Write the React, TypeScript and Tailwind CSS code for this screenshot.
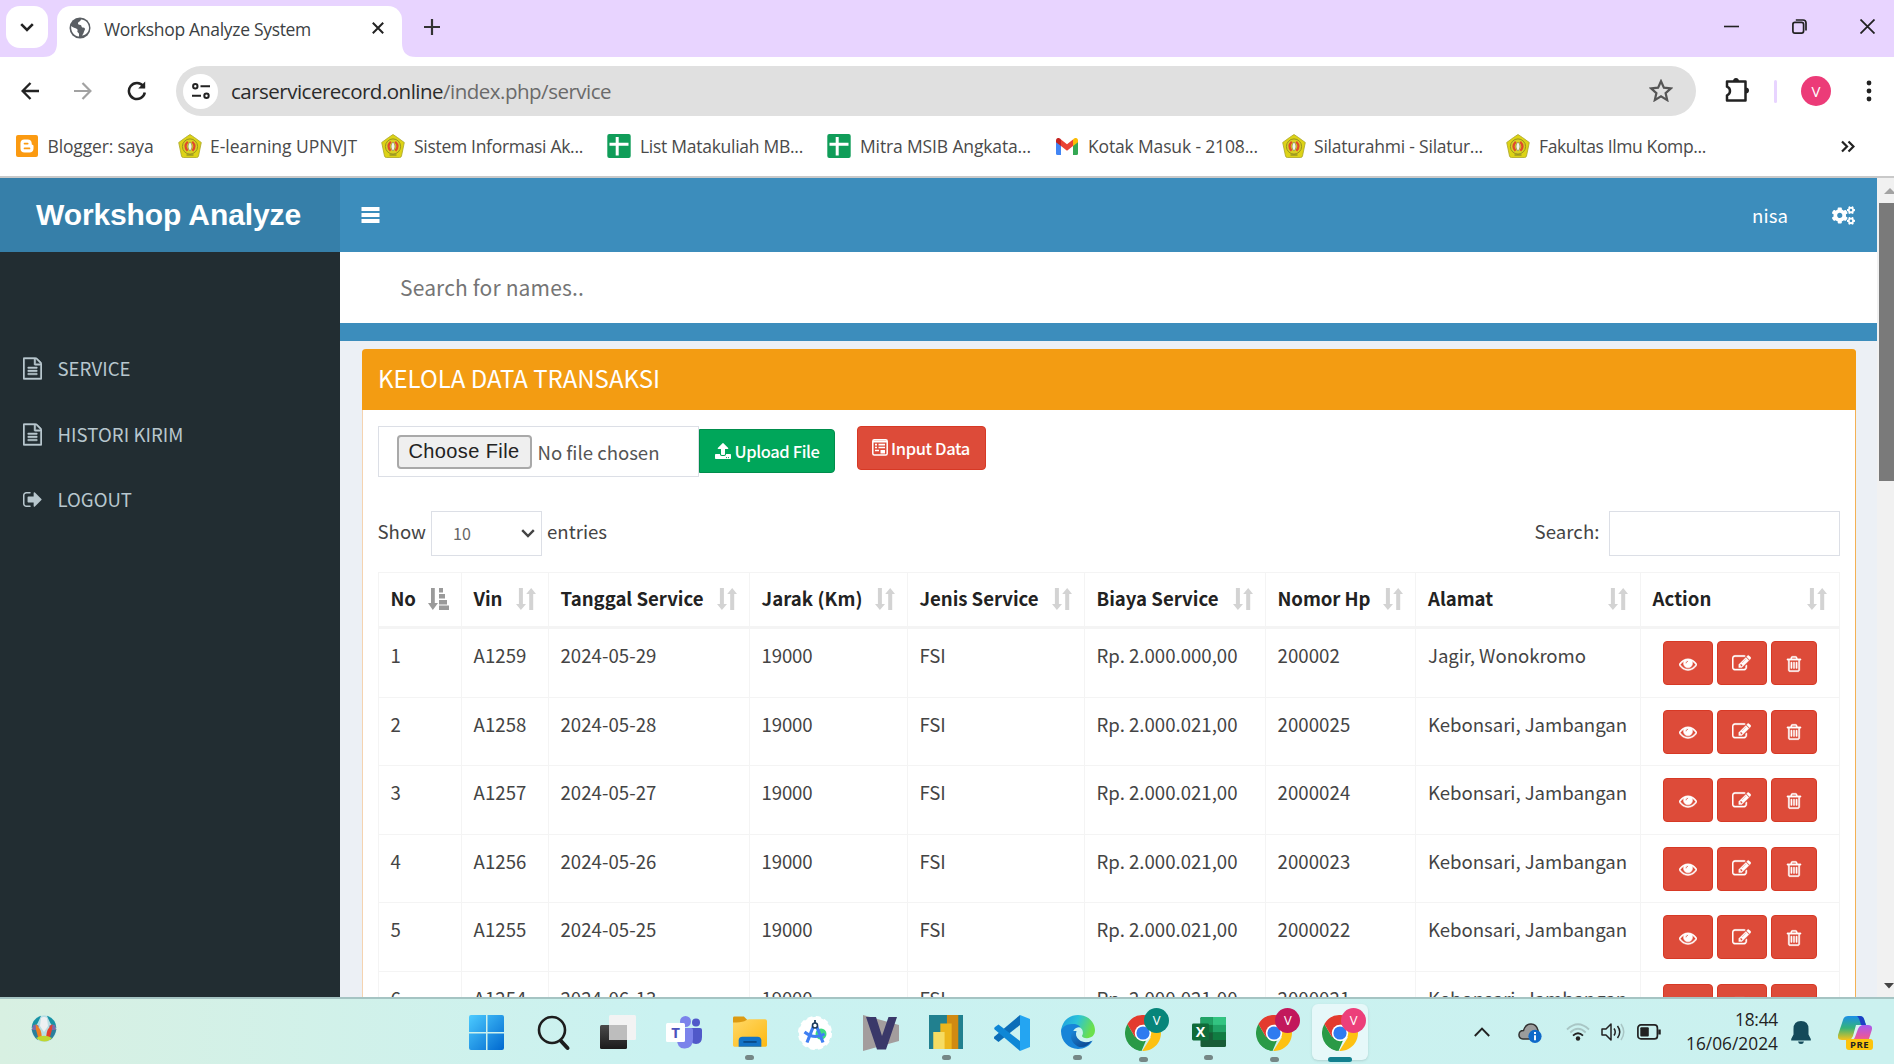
import { useLayoutEffect, useRef, useState, type ReactNode } from "react";
import { FaCogs, FaUpload } from "react-icons/fa";

const SEGOE = "font-['Open_Sans','Noto_Sans',sans-serif]";
const SOURCE = "font-['Noto_Sans_CJK_SC','Noto_Sans',sans-serif]";

/** Single line of text whose tracking is adjusted so that it spans `w` pixels. */
function Fit({ w, className = "", children }: { w: number; className?: string; children: ReactNode }) {
  const ref = useRef<HTMLSpanElement>(null);
  const [spacing, setSpacing] = useState(0);
  useLayoutEffect(() => {
    const el = ref.current;
    if (!el) return;
    const n = (el.textContent ?? "").length;
    if (n > 0) setSpacing((w - el.getBoundingClientRect().width) / n);
  }, [w]);
  return (
    <span ref={ref} className={`inline-block shrink-0 whitespace-pre ${className}`} style={{ letterSpacing: spacing }}>
      {children}
    </span>
  );
}

/* ---------- icons ---------- */

function FileTextIcon() {
  return (
    <svg viewBox="0 0 1536 1792" className="h-[23px] w-[19px]" fill="currentColor" stroke="currentColor" strokeWidth="35">
      <path d="M1468 380q28 28 48 76t20 88v1152q0 40-28 68t-68 28h-1344q-40 0-68-28t-28-68v-1600q0-40 28-68t68-28h896q40 0 88 20t76 48zm-444-244v376h376q-10-29-22-41l-313-313q-12-12-41-22zm384 1528v-1024h-416q-40 0-68-28t-28-68v-416h-768v1536h1280zm-1024-864q0-14 9-23t23-9h704q14 0 23 9t9 23v64q0 14-9 23t-23 9h-704q-14 0-23-9t-9-23v-64zm736 224q14 0 23 9t9 23v64q0 14-9 23t-23 9h-704q-14 0-23-9t-9-23v-64q0-14 9-23t23-9h704zm0 256q14 0 23 9t9 23v64q0 14-9 23t-23 9h-704q-14 0-23-9t-9-23v-64q0-14 9-23t23-9h704z" />
    </svg>
  );
}

function SignOutIcon() {
  return (
    <svg viewBox="64 256 1600 1280" className="h-[17px] w-[19px]" fill="currentColor">
      <path d="M704 1440q0 4 1 20t.5 26.5-3 23.5-10 19.5-20.5 6.5h-320q-119 0-203.5-84.5t-84.5-203.5v-704q0-119 84.5-203.5t203.5-84.5h320q13 0 22.5 9.5t9.5 22.5q0 4 1 20t.5 26.5-3 23.5-10 19.5-20.5 6.5h-320q-66 0-113 47t-47 113v704q0 66 47 113t113 47h312l11.5 1 11.5 3 8 5.5 7 9 2 13.5zm928-544q0 26-19 45l-544 544q-19 19-45 19t-45-19-19-45v-288h-448q-26 0-45-19t-19-45v-384q0-26 19-45t45-19h448v-288q0-26 19-45t45-19 45 19l544 544q19 19 19 45z" />
    </svg>
  );
}

function EyeIcon() {
  return (
    <svg viewBox="0 0 1792 1792" className="h-[18px] w-[18px]" fill="currentColor" stroke="currentColor" strokeWidth="50">
      <path d="M1664 960q-152-236-381-353 61 104 61 225 0 185-131.5 316.5t-316.5 131.5-316.5-131.5-131.5-316.5q0-121 61-225-229 117-381 353 133 205 333.5 326.5t434.5 121.5 434.5-121.5 333.5-326.5zm-720-384q0-20-14-34t-34-14q-125 0-214.5 89.5t-89.5 214.5q0 20 14 34t34 14 34-14 14-34q0-86 61-147t147-61q20 0 34-14t14-34zm848 384q0 34-20 69-140 230-376.5 368.5t-499.5 138.5-499.5-139-376.5-368q-20-35-20-69t20-69q140-229 376.5-368t499.5-139 499.5 139 376.5 368q20 35 20 69z" />
      <circle cx="896" cy="832" r="300" />
      <path d="M700 830q0-190 196-200" fill="none" stroke="#dd4b39" strokeWidth="70" />
    </svg>
  );
}

function EditIcon() {
  return (
    <svg viewBox="0 0 1792 1792" className="h-[19px] w-[19px]" fill="currentColor" stroke="currentColor" strokeWidth="35">
      <path d="M888 1184l116-116-152-152-116 116v56h96v96h56zm440-720q-16-16-33 1l-350 350q-17 17-1 33t33-1l350-350q17-17 1-33zm80 594v190q0 119-84.5 203.5t-203.5 84.5h-832q-119 0-203.5-84.5t-84.5-203.5v-832q0-119 84.5-203.5t203.5-84.5h832q63 0 117 25 15 7 18 23 3 17-9 29l-49 49q-14 14-32 8-23-6-45-6h-832q-66 0-113 47t-47 113v832q0 66 47 113t113 47h832q66 0 113-47t47-113v-126q0-13 9-22l64-64q15-15 35-7t20 29zm-96-738l288 288-672 672h-288v-288zm444 132l-92 92-288-288 92-92q28-28 68-28t68 28l152 152q28 28 28 68t-28 68z" />
    </svg>
  );
}

function TrashIcon() {
  return (
    <svg viewBox="0 0 1792 1792" className="h-[18px] w-[18px]" fill="currentColor" stroke="currentColor" strokeWidth="40">
      <path d="M704 736v576q0 14-9 23t-23 9h-64q-14 0-23-9t-9-23v-576q0-14 9-23t23-9h64q14 0 23 9t9 23zm256 0v576q0 14-9 23t-23 9h-64q-14 0-23-9t-9-23v-576q0-14 9-23t23-9h64q14 0 23 9t9 23zm256 0v576q0 14-9 23t-23 9h-64q-14 0-23-9t-9-23v-576q0-14 9-23t23-9h64q14 0 23 9t9 23zm128 724v-948h-896v948q0 22 7 40.500t14.500 27 10.500 8.500h832q3 0 10.500-8.500t14.500-27 7-40.500zm-672-1076h448l-48-117q-7-9-17-11h-317q-10 2-17 11zm928 32v64q0 14-9 23t-23 9h-96v948q0 83-47 143.500t-113 60.500h-832q-66 0-113-58.500t-47-141.500v-952h-96q-14 0-23-9t-9-23v-64q0-14 9-23t23-9h309l70-167q15-37 54-63t79-26h320q40 0 79 26t54 63l70 167h309q14 0 23 9t9 23z" />
    </svg>
  );
}

function SortIcon({ active = false }: { active?: boolean }) {
  return active ? (
    <svg viewBox="0 0 21 22" className="h-[22px] w-[21px] shrink-0 text-[#9a9a9a]" fill="currentColor">
      <path d="M3 0h3.800v15H10l-5.200 7L0 15h3zM11 0h4v4.400h-4zM11 6h6v4.400h-6zM11 12h8v4.400h-8zM11 17.600h10V22H11z" />
    </svg>
  ) : (
    <svg viewBox="0 0 20 22" className="h-[22px] w-[20px] shrink-0 text-[#d3d3d3]" fill="currentColor">
      <path d="M2.900 0h4v16H10L4.900 22 0 16h2.900zM13.200 22h4V6H20L15.200 0 10.200 6h3z" />
    </svg>
  );
}

function FormIcon() {
  return (
    <svg viewBox="0 0 16 17" className="h-[17px] w-[16px]" fill="none" stroke="currentColor" strokeWidth="1.500">
      <rect x=".8" y=".8" width="14.400" height="15.200" rx="1.500" />
      <path d="M1 2.500h14" strokeWidth="2" />
      <path d="M3 5.600h2M6.500 5.600h6.500M3 8.500h2M6.500 8.500h6.500M3 11.500h4" strokeWidth="1.700" />
      <path d="M8.500 11h4.500v3.500H8.500z" fill="currentColor" stroke="none" />
    </svg>
  );
}

function GlobeIcon() {
  return (
    <svg viewBox="0 0 22 22" className="h-[22px] w-[22px]">
      <circle cx="11" cy="11" r="10.500" fill="#5a5e63" />
      <path d="M12 2.500c-.5 2-2.500 2-3 3.500-.3 1.500 1 1.500 2.500 2s.5 2.500 2.500 2.500 2.500 1.500 1.500 3-.5 3-2.500 5c4-.6 7-3.500 7-7.800 0-4.200-3.500-8.200-8-8.200zM2.200 9c1.500 2 4.300 1.500 5.800 3s-.5 2.500 1 3.500 1 2.500 1 4C5 19 1.700 15 2.200 9z" fill="#fff" />
    </svg>
  );
}

function UniversityIcon() {
  return (
    <svg viewBox="0 0 24 24" className="h-[24px] w-[24px] shrink-0">
      <path d="M12 .5l4.500 3L23.300 8.500 20.500 22q-.3 1.500-2 1.500h-13q-1.700 0-2-1.500L.7 8.500 7.500 3.500z" fill="#ddd316" stroke="#a9a428" strokeWidth=".8" />
      <circle cx="12" cy="12.500" r="7.600" fill="#d9cf22" stroke="#8f8b23" strokeWidth=".9" />
      <path d="M9.800 7.800q-4.500 4.500-.2 9M14.200 7.800q4.500 4.500.2 9" fill="none" stroke="#e0492c" strokeWidth="2.200" />
      <path d="M12 8c1.300 1.400 1.900 2.600 1.900 4.400S13.200 15.800 12 17c-1.200-1.200-1.900-2.700-1.900-4.600S10.700 9.400 12 8z" fill="#f3f3ea" stroke="#7c7a3c" strokeWidth=".6" />
      <path d="M8.500 21h7" stroke="#7c7a2b" strokeWidth="1" />
    </svg>
  );
}

function SheetIcon() {
  return (
    <svg viewBox="0 0 24 24" className="h-[24px] w-[24px] shrink-0">
      <rect x=".3" width="23.400" height="24" rx="2" fill="#109d59" />
      <path d="M10.200 3v18.500M2.500 10.300h19" stroke="#fff" strokeWidth="3" />
    </svg>
  );
}

function BloggerIcon() {
  return (
    <svg viewBox="0 0 22 22" className="h-[22px] w-[22px] shrink-0">
      <rect width="22" height="22" rx="2" fill="#fb9a11" />
      <path d="M8.200 4.500h3.500c2.500 0 4 1.500 4 3.800 0 1.600.5 1.500 1.300 1.700.4.200.5.500.5 1v2.500c0 2.500-1.600 4-4 4H8.500c-2.500 0-4-1.500-4-4V8.300c0-2.300 1.300-3.800 3.700-3.800z" fill="#fff" />
      <path d="M8.500 8.600h3.200M8.500 13.400h5" stroke="#fb9a11" strokeWidth="1.700" strokeLinecap="round" />
    </svg>
  );
}

function GmailIcon() {
  return (
    <svg viewBox="0 0 22 17" className="h-[17px] w-[22px] shrink-0">
      <path d="M0 3v12.500Q0 17 1.500 17H5V7z" fill="#4285f4" />
      <path d="M22 3v12.500q0 1.500-1.500 1.500H17V7z" fill="#34a853" />
      <path d="M5 1.500l6 4.700 6-4.700V8l-6 4.700L5 8z" fill="#ea4335" />
      <path d="M0 2.500C0 .3 2.300-.8 4 .6l1 .9V8L0 4.200z" fill="#c5221f" />
      <path d="M22 2.500C22 .3 19.700-.8 18 .6l-1 .9V8l5-3.800z" fill="#fbbc04" />
    </svg>
  );
}

function BookmarkIcon({ kind }: { kind: string }) {
  if (kind === "blogger") return <BloggerIcon />;
  if (kind === "sheet") return <SheetIcon />;
  if (kind === "gmail") return <GmailIcon />;
  return <UniversityIcon />;
}

/* ---------- browser chrome ---------- */

function TabStrip() {
  return (
    <div className="flex h-[57px] shrink-0 bg-[#e8d4ff] pl-[6px]">
      <button className="mt-[6px] flex h-[42px] w-[42px] items-center justify-center rounded-[14px] bg-white">
        <svg viewBox="0 0 14 9" className="h-[9px] w-[14px]" fill="none" stroke="#222" strokeWidth="2.600">
          <path d="M1.200 1.200L7 7l5.800-5.800" />
        </svg>
      </button>
      <svg viewBox="0 0 14 14" className="-ml-[5px] h-[14px] w-[14px] self-end" fill="#fff">
        <path d="M14 0v14H0Q14 14 14 0z" />
      </svg>
      <div className="mt-[6px] flex h-[51px] w-[345px] items-center rounded-t-[14px] bg-white pb-[8px] pl-[12px]">
        <GlobeIcon />
        <Fit w={207} className="ml-[13px] mt-[2px] text-[17.500px] leading-6 text-[#3c3f43]">
          Workshop Analyze System
        </Fit>
        <svg viewBox="0 0 12 12" className="ml-[61px] h-[12px] w-[12px]" stroke="#222" strokeWidth="2">
          <path d="M.8.8l10.400 10.400M11.200.8L.8 11.200" />
        </svg>
      </div>
      <svg viewBox="0 0 14 14" className="h-[14px] w-[14px] self-end" fill="#fff">
        <path d="M0 0v14h14Q0 14 0 0z" />
      </svg>
      <svg viewBox="0 0 16 16" className="ml-[8px] mt-[19px] h-[16px] w-[16px]" stroke="#333" strokeWidth="2.200">
        <path d="M8 0v16M0 8h16" />
      </svg>
      <div className="ml-auto flex h-[53px] items-center gap-[53px] pr-[19px]">
        <svg viewBox="0 0 15 15" className="h-[15px] w-[15px]" stroke="#222" strokeWidth="1.600">
          <path d="M0 7.500h15" />
        </svg>
        <svg viewBox="0 0 15 15" className="h-[15px] w-[15px]" fill="none" stroke="#222" strokeWidth="1.700">
          <rect x=".9" y="3.400" width="10.700" height="10.700" rx="2" />
          <path d="M3.800 1h7.200q3 0 3 3v7.400" />
        </svg>
        <svg viewBox="0 0 15 15" className="h-[15px] w-[15px]" stroke="#222" strokeWidth="1.800">
          <path d="M.5.5l14 14M14.500.5l-14 14" />
        </svg>
      </div>
    </div>
  );
}

function Toolbar() {
  return (
    <div className="flex h-[68px] shrink-0 items-center bg-white pl-[21px]">
      <svg viewBox="0 0 18 18" className="h-[18px] w-[18px]" fill="none" stroke="#222" strokeWidth="2.400">
        <path d="M18 9H2M9.500 1L1.600 9l7.900 8" />
      </svg>
      <svg viewBox="0 0 18 18" className="ml-[35px] h-[18px] w-[18px]" fill="none" stroke="#a2a2a2" strokeWidth="2.200">
        <path d="M0 9h16M8.500 1l7.900 8-7.900 8" />
      </svg>
      <svg viewBox="0 0 20 20" className="ml-[35px] h-[20px] w-[20px]" fill="none" stroke="#222" strokeWidth="2.500">
        <path d="M17.800 11.500a8 8 0 1 1-1.500-6.300l1 1.300" />
        <path d="M18.200.5v7h-7z" fill="#222" stroke="none" />
      </svg>
      <div className="ml-[29px] flex h-[50px] w-[1520px] items-center rounded-full bg-[#e0e0e0] pl-[7px] pr-[23px]">
        <div className="flex h-[35px] w-[35px] items-center justify-center rounded-full bg-white">
          <svg viewBox="0 0 18 16" className="h-[16px] w-[18px]" fill="none" stroke="#222" strokeWidth="2">
            <circle cx="3.300" cy="3.200" r="2.200" />
            <path d="M8.500 3.200H18M0 12.800h9" />
            <circle cx="14.500" cy="12.800" r="2.200" />
          </svg>
        </div>
        <Fit w={380} className="ml-[13px] text-[20.500px] leading-7 text-[#6a6a6a]">
          <span className="text-[#2b2b2b]">carservicerecord.online</span>/index.php/service
        </Fit>
        <svg viewBox="0 0 24 23" className="mb-px ml-auto h-[23px] w-[24px]" fill="none" stroke="#555" strokeWidth="2.200">
          <path d="M12 2.200l2.900 6.500 7 .7-5.300 4.700 1.600 7L12 17.400 5.800 21.100l1.600-7L2.100 9.400l7-.7z" />
        </svg>
      </div>
      <svg viewBox="0 0 26 25" className="mb-[2px] ml-[28px] h-[25px] w-[26px]" fill="none" stroke="#222" strokeWidth="2.500">
        <path d="M3 3.500h18.500v19H3v-5.200q3-1.200 3-4.300T3 8.700z" strokeLinejoin="round" />
        <path d="M9 3.500a3 3.500 0 0 1 6 0zM21.500 9.500a3.500 3 0 0 1 0 6z" fill="#222" stroke="none" />
      </svg>
      <div className="ml-[24px] h-[23px] w-[3px] rounded bg-[#e8d4ff]" />
      <div className="ml-[24px] flex h-[30px] w-[30px] items-center justify-center rounded-full bg-[#ec3b78] text-[15px] leading-none text-white">
        V
      </div>
      <svg viewBox="0 0 6 22" className="ml-[35px] h-[22px] w-[6px]" fill="#222">
        <circle cx="3" cy="3" r="2.400" />
        <circle cx="3" cy="11" r="2.400" />
        <circle cx="3" cy="19" r="2.400" />
      </svg>
    </div>
  );
}

const bookmarks = [
  { kind: "blogger", label: "Blogger: saya", w: 106, gap: "gap-[9.500px]", item: "w-[162px]" },
  { kind: "uni", label: "E-learning UPNVJT", w: 147, gap: "gap-[8px]", item: "w-[203px]" },
  { kind: "uni", label: "Sistem Informasi Ak...", w: 169, gap: "gap-[9px]", item: "w-[226px]" },
  { kind: "sheet", label: "List Matakuliah MB...", w: 163, gap: "gap-[9px]", item: "w-[220px]" },
  { kind: "sheet", label: "Mitra MSIB Angkata...", w: 171, gap: "gap-[9px]", item: "w-[229px]" },
  { kind: "gmail", label: "Kotak Masuk - 2108...", w: 170, gap: "gap-[10px]", item: "w-[226px]" },
  { kind: "uni", label: "Silaturahmi - Silatur...", w: 169, gap: "gap-[8px]", item: "w-[224px]" },
  { kind: "uni", label: "Fakultas Ilmu Komp...", w: 167, gap: "gap-[9px]", item: "w-[226px]" },
];

function BookmarksBar() {
  return (
    <div className="flex h-[53px] shrink-0 items-center border-b-2 border-[#c9c9c9] bg-white pb-[9px] pl-[16px]">
      {bookmarks.map((b) => (
        <div key={b.label} className={`flex shrink-0 items-center ${b.item} ${b.gap}`}>
          <BookmarkIcon kind={b.kind} />
          <Fit w={b.w} className="-mt-px text-[17.500px] leading-6 text-[#4a4a4a]">
            {b.label}
          </Fit>
        </div>
      ))}
      <svg viewBox="0 0 14 12" className="ml-auto mr-[39px] h-[13px] w-[14px]" fill="none" stroke="#222" strokeWidth="2.200">
        <path d="M1 1l5 5-5 5M7.500 1l5 5-5 5" />
      </svg>
    </div>
  );
}

/* ---------- web page ---------- */

function Sidebar() {
  const items = [
    { label: "SERVICE", w: 73, icon: <FileTextIcon /> },
    { label: "HISTORI KIRIM", w: 126, icon: <FileTextIcon /> },
    { label: "LOGOUT", w: 74.5, icon: <SignOutIcon /> },
  ];
  return (
    <aside className="w-[339.500px] shrink-0 bg-[#222d32]">
      <div className="flex h-[74px] items-center bg-[#367fa9] pl-[36px]">
        <Fit w={265} className="font-['Liberation_Sans',Arial,sans-serif] text-[30px] font-bold leading-9 text-white">
          Workshop Analyze
        </Fit>
      </div>
      <nav className="mt-[84px] text-[#b8c7ce]">
        {items.map((it) => (
          <div key={it.label} className="flex h-[65.500px] items-center pl-[23px]">
            {it.icon}
            <Fit w={it.w} className="-mt-px ml-[15.500px] text-[18.600px] leading-7">
              {it.label}
            </Fit>
          </div>
        ))}
      </nav>
    </aside>
  );
}

const columns = [
  { label: "No", w: 25, width: "w-[83px]", active: true },
  { label: "Vin", w: 29, width: "w-[87px]" },
  { label: "Tanggal Service", w: 143, width: "w-[201px]" },
  { label: "Jarak (Km)", w: 101, width: "w-[158px]" },
  { label: "Jenis Service", w: 119, width: "w-[177px]" },
  { label: "Biaya Service", w: 122, width: "w-[181px]" },
  { label: "Nomor Hp", w: 93, width: "w-[150.500px]" },
  { label: "Alamat", w: 65, width: "w-[224.500px]" },
  { label: "Action", w: 59, width: "w-[199px]" },
];

const rows = [
  ["1", "A1259", "2024-05-29", "19000", "FSI", "Rp. 2.000.000,00", "200002", "Jagir, Wonokromo"],
  ["2", "A1258", "2024-05-28", "19000", "FSI", "Rp. 2.000.021,00", "2000025", "Kebonsari, Jambangan"],
  ["3", "A1257", "2024-05-27", "19000", "FSI", "Rp. 2.000.021,00", "2000024", "Kebonsari, Jambangan"],
  ["4", "A1256", "2024-05-26", "19000", "FSI", "Rp. 2.000.021,00", "2000023", "Kebonsari, Jambangan"],
  ["5", "A1255", "2024-05-25", "19000", "FSI", "Rp. 2.000.021,00", "2000022", "Kebonsari, Jambangan"],
  ["6", "A1254", "2024-06-13", "19000", "FSI", "Rp. 2.000.021,00", "2000021", "Kebonsari, Jambangan"],
];

function cellWidth(col: number, text: string) {
  if (col === 7) return text.startsWith("Jagir") ? 158 : 199;
  return [10, 53, 96, 51, 26, 141, text.length * 10.400][col];
}

function DataTable() {
  return (
    <div className="mt-[16px] w-[1462px] border-l border-t border-[#f4f4f4]">
      <div className="flex h-[56px] border-b-[3px] border-[#f4f4f4]">
        {columns.map((c) => (
          <div key={c.label} className={`flex shrink-0 items-center justify-between border-r border-[#f4f4f4] pb-[2px] pl-[12px] pr-[12px] ${c.width}`}>
            <Fit w={c.w} className="-mt-px text-[18.600px] font-bold leading-7 text-[#222]">
              {c.label}
            </Fit>
            <SortIcon active={c.active} />
          </div>
        ))}
      </div>
      {rows.map((r) => (
        <div key={r[0]} className="flex h-[68.500px] border-b border-[#f4f4f4]">
          {r.map((t, i) => (
            <div key={i} className={`shrink-0 border-r border-[#f4f4f4] pl-[12px] pt-[12px] ${columns[i].width}`}>
              <Fit w={cellWidth(i, t)} className="text-[18.600px] leading-7 text-[#444]">
                {t}
              </Fit>
            </div>
          ))}
          <div className="flex w-[199px] shrink-0 gap-[4px] border-r border-[#f4f4f4] pl-[22px] pt-[12px] text-white">
            <button className="flex h-[44px] w-[50px] items-center justify-center rounded-[4px] border border-[#d73925] bg-[#dd4b39] pt-px">
              <EyeIcon />
            </button>
            <button className="flex h-[44px] w-[50px] items-center justify-center rounded-[4px] border border-[#d73925] bg-[#dd4b39]">
              <EditIcon />
            </button>
            <button className="flex h-[44px] w-[46px] items-center justify-center rounded-[4px] border border-[#d73925] bg-[#dd4b39] pt-px">
              <TrashIcon />
            </button>
          </div>
        </div>
      ))}
    </div>
  );
}

function Panel() {
  return (
    <section className="ml-[22px] mt-[8px] h-[700px] w-[1494px] shrink-0 rounded-t-[4px] border-x border-l-[#f5d3b0] border-r-[#f3b155] bg-white">
      <div className="-mx-px flex h-[61px] items-center rounded-t-[4px] bg-[#f39c12] pl-[16.500px]">
        <Fit w={282} className="-mt-[3px] text-[24px] leading-9 text-white">
          KELOLA DATA TRANSAKSI
        </Fit>
      </div>
      <div className="pl-[15px]">
        <div className="mt-[16px] flex h-[51px] items-start">
          <div className="flex h-[51px] w-[321px] items-center border border-[#dcdfe6] pl-[18px]">
            <button className="flex h-[34px] w-[135px] items-center justify-center rounded-[4px] border-2 border-[#a9a9a9] bg-[#efefef] pb-px">
              <Fit w={111} className="font-['Liberation_Sans',Arial,sans-serif] text-[20px] leading-6 text-[#222]">
                Choose File
              </Fit>
            </button>
            <Fit w={122} className="ml-[6px] text-[18.600px] leading-7 text-[#555]">
              No file chosen
            </Fit>
          </div>
          <button className="mt-[3px] flex h-[44px] w-[136px] items-center justify-center gap-[3px] rounded-r-[4px] border border-[#008d4c] bg-[#00a65a] text-white">
            <FaUpload className="h-[16px] w-[18px]" />
            <Fit w={85} className="text-[16.500px] font-medium leading-6">
              Upload File
            </Fit>
          </button>
          <button className="ml-[22px] flex h-[44px] w-[129px] items-center justify-center gap-[3px] rounded-[4px] border border-[#d73925] bg-[#dd4b39] pb-px text-white">
            <FormIcon />
            <Fit w={79} className="text-[16.500px] font-medium leading-6">
              Input Data
            </Fit>
          </button>
        </div>
        <div className="mt-[34px] flex h-[45px] w-[1462px] items-center text-[18.600px] text-[#444]">
          <Fit w={48.5} className="mb-[5px] leading-7">Show</Fit>
          <div className="ml-[5px] flex h-[45px] w-[111px] items-center justify-between border border-[#dcdfe6] pl-[21px] pr-[6px] text-[#666]">
            <Fit w={18} className="-mt-[2px] text-[16px] leading-6">10</Fit>
            <svg viewBox="0 0 14 9" className="h-[9px] w-[14px]" fill="none" stroke="#444" strokeWidth="2.400">
              <path d="M1.200 1.200L7 7l5.800-5.800" />
            </svg>
          </div>
          <Fit w={60} className="mb-[5px] ml-[5px] leading-7">entries</Fit>
          <Fit w={65} className="mb-[5px] ml-auto leading-7">Search:</Fit>
          <div className="ml-[9px] h-[45px] w-[231px] border border-[#dcdfe6]" />
        </div>
        <DataTable />
      </div>
    </section>
  );
}

function PageScrollbar() {
  return (
    <div className="flex w-[17px] shrink-0 flex-col items-end bg-[#f1f1f1]">
      <svg viewBox="0 0 12 25" className="h-[25px] w-[12px]" fill="#a3a3a3">
        <path d="M2 16l6-6 6 6z" />
      </svg>
      <div className="h-[278px] w-[15px] bg-[#7a7a7a]" />
      <svg viewBox="0 0 12 24" className="mt-auto h-[24px] w-[12px]" fill="#444">
        <path d="M2 10l5 5.500 5-5.500z" />
      </svg>
    </div>
  );
}

function WebPage() {
  return (
    <div className={`flex h-[819px] shrink-0 overflow-hidden ${SOURCE}`}>
      <Sidebar />
      <main className="flex w-[1537.500px] shrink-0 flex-col overflow-hidden bg-[#ecf0f5]">
        <div className="flex h-[74px] shrink-0 items-center bg-[#3c8dbc] pl-[21.500px] pr-[22px] text-white">
          <svg viewBox="0 0 19 16" className="h-[16px] w-[19px]" fill="currentColor">
            <path d="M.5 0h18v4H.5zM.5 6h18v4H.5zM.5 12h18v4H.5z" />
          </svg>
          <Fit w={36} className="-mt-px ml-auto text-[18.600px] leading-7">nisa</Fit>
          <FaCogs className="ml-[44px] h-[23px] w-[23px]" />
        </div>
        <div className="flex h-[71px] shrink-0 items-center bg-white pl-[60.500px]">
          <Fit w={184} className="-mt-px text-[21px] leading-8 text-[#757575]">Search for names..</Fit>
        </div>
        <div className="h-[18px] shrink-0 bg-[#3c8dbc]" />
        <Panel />
      </main>
      <PageScrollbar />
    </div>
  );
}

/* ---------- taskbar ---------- */

function ChromeLogo() {
  return (
    <svg viewBox="0 0 48 48" className="h-[36px] w-[36px]">
      <path d="M3.200 12L13.600 30 24 35 20 47.700A24 24 0 0 1 3.200 12z" fill="#2a9a47" />
      <path d="M13 28l11 7 4-1-6 14A24 24 0 0 1 5 38z" fill="#2a9a47" />
      <path d="M24 13h21.300A24 24 0 0 1 23 48l11.400-18z" fill="#fdc113" />
      <path d="M24 13H45.300L44.800 12A24 24 0 0 0 3.200 12l10.400 18z" fill="#e33b2e" />
      <circle cx="24" cy="24" r="11" fill="#fff" />
      <circle cx="24" cy="24" r="8.800" fill="#2f7bf0" />
    </svg>
  );
}

function ChromeProfile({ badge }: { badge: string }) {
  return (
    <div className="relative">
      <ChromeLogo />
      <div className={`absolute -right-[8px] -top-[7px] flex h-[25px] w-[25px] items-center justify-center rounded-full text-[13px] font-medium leading-none text-white ${badge}`}>
        V
      </div>
    </div>
  );
}

const I = "h-[36px] w-[36px]";

function WindowsIcon() {
  return (
    <svg viewBox="0 0 36 36" className={I}>
      <defs>
        <linearGradient id="win" x1="0" y1="0" x2="1" y2="1">
          <stop offset="0" stopColor="#4ccbff" />
          <stop offset="1" stopColor="#0068cf" />
        </linearGradient>
      </defs>
      <path d="M2 0h15v17H0V2q0-2 2-2zM18.500 0H33q2 0 2 2v15H18.500zM0 18.500h17V35H2q-2 0-2-2zM18.500 18.500H35V33q0 2-2 2H18.500z" fill="url(#win)" />
    </svg>
  );
}

function SearchTaskIcon() {
  return (
    <svg viewBox="0 0 36 36" className={I} fill="none" stroke="#1d1d1d">
      <circle cx="17" cy="15" r="13" strokeWidth="2.600" />
      <path d="M26 26l6.500 7" strokeWidth="4" strokeLinecap="round" />
    </svg>
  );
}

function TaskViewIcon() {
  return (
    <svg viewBox="0 0 36 36" className={I}>
      <defs>
        <linearGradient id="tv" x1="0" y1="0" x2="0" y2="1">
          <stop offset="0" stopColor="#4a4a4a" />
          <stop offset="1" stopColor="#1b1b1b" />
        </linearGradient>
      </defs>
      <rect x="0" y="10" width="27" height="24" rx="1.500" fill="url(#tv)" />
      <rect x="9" y="0" width="27" height="25" rx="1.500" fill="#f3f3f3" />
      <rect x="9" y="10" width="18" height="15" fill="#bdbdbd" />
    </svg>
  );
}

function TeamsIcon() {
  return (
    <svg viewBox="0 0 36 36" className={I}>
      <circle cx="19.500" cy="6.500" r="5.500" fill="#7b83eb" />
      <circle cx="30" cy="7.500" r="4" fill="#5059c9" />
      <path d="M24 13h10q2 0 2 2v7q0 7-6 7t-6-7z" fill="#5059c9" />
      <path d="M11 13h14q2 0 2 2v9q0 9-8 9.500T11 24z" fill="#7b83eb" />
      <rect x="0" y="8" width="19" height="19" rx="1.500" fill="#fff" />
      <text x="9.500" y="23" fontSize="15" fontWeight="700" textAnchor="middle" fill="#4b53bc">T</text>
    </svg>
  );
}

function ExplorerIcon() {
  return (
    <svg viewBox="0 0 36 36" className={I}>
      <defs>
        <linearGradient id="fold" x1="0" y1="0" x2="1" y2="1">
          <stop offset="0" stopColor="#ffd867" />
          <stop offset="1" stopColor="#fdb913" />
        </linearGradient>
      </defs>
      <path d="M0 3q0-1.500 1.500-1.500h10L15 5v6H0z" fill="#dc9a12" />
      <path d="M0 8q8 0 12-1.500 3-2 5-2h17q2 0 2 2V32q0 1.500-1.500 1.500h-33Q0 33.500 0 32z" fill="url(#fold)" />
      <path d="M6 33.500V27q0-4 4-4h16q4 0 4 4v6.500z" fill="#1273c6" />
      <path d="M11 28.500h14" stroke="#084b8a" strokeWidth="2" />
    </svg>
  );
}

function AndroidStudioIcon() {
  return (
    <svg viewBox="0 0 36 36" className={I}>
      <circle cx="18" cy="18" r="16" fill="#fff" />
      <circle cx="18" cy="18" r="15.800" fill="none" stroke="#fff" strokeWidth="2.500" strokeDasharray="5 3.300" />
      <circle cx="24" cy="19" r="5.500" fill="#3ddc84" />
      <path d="M16.500 11L10 27.500M19.500 11L26 27.500" stroke="#3f7ff2" strokeWidth="3.200" />
      <path d="M7.500 17q10 8 20 2" fill="none" stroke="#3f7ff2" strokeWidth="3" />
      <circle cx="18" cy="10.500" r="2.500" fill="#fff" stroke="#1c3a5c" strokeWidth="1.600" />
      <path d="M18 5v3" stroke="#1c3a5c" strokeWidth="1.800" />
    </svg>
  );
}

function VIcon() {
  return (
    <svg viewBox="0 0 36 36" className={I}>
      <path d="M0 0l36 10v16L0 36z" fill="#a39d9d" />
      <path d="M3 2h10l6 19 6.500-19H34L23 34.500h-9z" fill="#3a3869" />
    </svg>
  );
}

function PowerBiIcon() {
  return (
    <svg viewBox="0 0 36 36" className={I}>
      <rect width="36" height="36" fill="#21808f" />
      <path d="M19 0h12v36H19z" fill="#d18a12" />
      <path d="M12 9h12v27H12z" fill="#ecb61c" />
      <path d="M4.500 18h12v18h-12z" fill="#f6dc62" />
    </svg>
  );
}

function VsCodeIcon() {
  return (
    <svg viewBox="0 0 36 36" className={I}>
      <path d="M26 0v10L4.500 27 0 23.500q-.5-1 .5-2z" fill="#0b6db8" />
      <path d="M26 36V26L4.500 9.500 1 12q-1.500 1.200-.3 2.500z" fill="#0e87d6" />
      <path d="M26 0L36 4v28l-10 4z" fill="#24a5f2" />
    </svg>
  );
}

function EdgeIcon() {
  return (
    <svg viewBox="0 0 36 36" className={I}>
      <defs>
        <linearGradient id="ed1" x1="0" y1="0" x2="1" y2="0.300">
          <stop offset="0" stopColor="#1b9ae0" />
          <stop offset="0.500" stopColor="#2cc3d9" />
          <stop offset="1" stopColor="#6be04c" />
        </linearGradient>
        <linearGradient id="ed2" x1="0" y1="0" x2="1" y2="1">
          <stop offset="0" stopColor="#1a86d8" />
          <stop offset="1" stopColor="#0c3f86" />
        </linearGradient>
      </defs>
      <path d="M0 17C1 7 8 0 18 0c11 0 18 8 18 16 0 6-4 8.500-8.500 8.500-4 0-6-1.500-5-3 1.500-2.500 1-8-5-9C11 11.500 3 12 0 18z" fill="url(#ed1)" />
      <path d="M0 17c1-5 7-8 13-7.500 4 0 7 2 7.500 3.500-5-1-9 3-8 9 1 5 6 9 13 8 4-.5 6-2 8-3-3 6-9 9-15.500 9C8 36 0 28 0 17z" fill="#1784d8" />
      <path d="M12.500 17c-4 5-1.500 13 5 16 5 2.300 11 0 15-5.500-5 2-10 1.500-13-1-3.500-2.600-4.500-6-3-9.500z" fill="url(#ed2)" />
    </svg>
  );
}

function ExcelIcon() {
  return (
    <svg viewBox="0 0 36 36" className={I}>
      <rect x="9" y="2" width="27" height="32" rx="1.500" fill="#185c37" />
      <path d="M9 3.500Q9 2 10.500 2H22v8.500H9z" fill="#21a366" />
      <path d="M22 2h12.500Q36 2 36 3.500v7H22z" fill="#33c481" />
      <path d="M9 10.500h13v8H9z" fill="#107c41" />
      <path d="M22 10.500h14v8H22z" fill="#21a366" />
      <path d="M22 18.500h14v8H22z" fill="#107c41" />
      <rect x="0" y="9" width="18" height="18" rx="1.500" fill="#0f6b39" />
      <text x="9" y="23.500" fontSize="15" fontWeight="700" textAnchor="middle" fill="#fff">X</text>
    </svg>
  );
}

const tasks: { id: string; icon: ReactNode; open?: boolean; active?: boolean }[] = [
  { id: "start", icon: <WindowsIcon /> },
  { id: "search", icon: <SearchTaskIcon /> },
  { id: "view", icon: <TaskViewIcon /> },
  { id: "teams", icon: <TeamsIcon /> },
  { id: "explorer", icon: <ExplorerIcon />, open: true },
  { id: "studio", icon: <AndroidStudioIcon /> },
  { id: "v", icon: <VIcon /> },
  { id: "bi", icon: <PowerBiIcon />, open: true },
  { id: "code", icon: <VsCodeIcon /> },
  { id: "edge", icon: <EdgeIcon />, open: true },
  { id: "chrome1", icon: <ChromeProfile badge="bg-[#07857a]" />, open: true },
  { id: "excel", icon: <ExcelIcon />, open: true },
  { id: "chrome2", icon: <ChromeProfile badge="bg-[#c2185b]" />, open: true },
  { id: "chrome3", icon: <ChromeProfile badge="bg-[#ec3f7a]" />, active: true },
];

function BallIcon() {
  return (
    <svg viewBox="0 0 26 28" className="h-[28px] w-[26px]">
      <ellipse cx="13" cy="13.500" rx="12.500" ry="13.300" fill="#b9dfe4" />
      <path d="M10 .7Q1 4 .7 13q4-1 6-5T10 .7zM16 .7q9 3.300 9.300 12.300-4-1-6-5T16 .7z" fill="#1793a5" />
      <path d="M.6 14q1 7 6 11l2-7q-3-6-8-4zM25.400 14q-1 7-6 11l-2-7q3-6 8-4z" fill="#2a7f9c" />
      <path d="M2 10q4-1 6 1l-3 4-4 0zM24 10q-4-1-6 1l3 4 4 0z" fill="#7d6aa8" />
      <path d="M4.500 9q6 4 6.500 14l-4-1Q4.500 15 4.500 9z" fill="#ef7d22" />
      <path d="M21.500 9q-6 4-6.500 14l4-1q2.500-7 2.500-13z" fill="#e2422f" />
      <path d="M5 23q8-4.500 16 0-7 7-16 0z" fill="#bfd730" />
      <path d="M10 3q3-2 6 0l1 8-4 6-4-6z" fill="#eef0f2" />
    </svg>
  );
}

function CopilotIcon() {
  return (
    <div className="relative h-[34px] w-[34px]">
      <svg viewBox="0 0 34 30" className="h-[30px] w-[34px]">
        <defs>
          <linearGradient id="cp1" x1="0" y1="0" x2="0" y2="1">
            <stop offset="0" stopColor="#1a8fe8" />
            <stop offset="0.500" stopColor="#35b37a" />
            <stop offset="1" stopColor="#f7c21b" />
          </linearGradient>
          <linearGradient id="cp2" x1="0" y1="0" x2="0" y2="1">
            <stop offset="0" stopColor="#a659f2" />
            <stop offset="0.600" stopColor="#e8579d" />
            <stop offset="1" stopColor="#f78a4c" />
          </linearGradient>
        </defs>
        <path d="M10 0h12q3 0 4 3l2 6h-5q-4 0-5 3l-3 9q-1 3-4 3H4q-5 0-4-5L5 4q1-4 5-4z" fill="url(#cp1)" />
        <path d="M19 0h3q3 0 4 3l2 6h-5q-2-8-4-9z" fill="#1c3fc4" />
        <path d="M24 9h6q5 0 3.800 5l-3.500 11q-1.300 4-5.300 4H12q-3 0-4-5h3q3 0 4-3l4-9q1-3 5-3z" fill="url(#cp2)" />
        <path d="M18 9h6q-3 1-4 4l-3 8q-1 3-4 3h-2q3-1 4-4z" fill="#d8f3f2" />
      </svg>
      <div className="absolute -right-px bottom-0 flex h-[11px] w-[27px] items-center justify-center rounded-[3px] bg-[#fcc40d] text-[9.500px] font-bold leading-none tracking-[0.500px] text-[#222]">
        PRE
      </div>
    </div>
  );
}

function Tray() {
  return (
    <div className="ml-auto flex h-full shrink-0 items-center pr-[22px]">
      <svg viewBox="0 0 16 10" className="h-[10px] w-[16px]" fill="none" stroke="#222" strokeWidth="1.900">
        <path d="M.8 9L8 1.600 15.200 9" />
      </svg>
      <svg viewBox="0 0 24 20" className="ml-[28px] mt-[3px] h-[20px] w-[24px]">
        <path d="M5 16q-4.300-.5-4-4.500T5.500 7.500Q7.500 1 13 1t7 6.500V16z" fill="#9c9c9c" stroke="#333" strokeWidth="1.500" />
        <circle cx="17" cy="13.300" r="6.600" fill="#0f69c9" />
        <path d="M17 12.200v5M17 9v2" stroke="#fff" strokeWidth="1.900" />
      </svg>
      <svg viewBox="0 0 24 18" className="ml-[24px] mt-px h-[18px] w-[24px]" fill="none" strokeWidth="1.800">
        <path d="M1 6.500q11-10.500 22 0M4.300 9.500q7.700-7.400 15.400 0" stroke="#a9c6c5" />
        <path d="M7 12.600q5-4.600 10 0" stroke="#222" />
        <circle cx="12" cy="15.500" r="2.200" fill="#222" />
      </svg>
      <svg viewBox="0 0 24 18" className="ml-[11px] mt-px h-[18px] w-[24px]" fill="none" stroke="#222" strokeWidth="1.500">
        <path d="M1 6h4l5-5v16l-5-5H1z" strokeLinejoin="round" />
        <path d="M13 5.500q2.500 3.500 0 7M16.500 3q4.500 6 0 12" />
        <path d="M20 1q5.500 8 0 16" stroke="#a9c6c5" />
      </svg>
      <svg viewBox="0 0 24 16" className="ml-[12px] mt-px h-[16px] w-[24px]" fill="none" stroke="#222" strokeWidth="1.700">
        <rect x=".9" y=".9" width="19.500" height="14" rx="3" />
        <rect x="3.300" y="3.300" width="8.500" height="9.200" rx="1" fill="#222" stroke="none" />
        <path d="M22.500 5.500v5" strokeWidth="2.500" />
      </svg>
      <div className="ml-[25px] mt-px flex flex-col items-end text-[17.300px] leading-6 text-[#222]">
        <Fit w={43}>18:44</Fit>
        <Fit w={92}>16/06/2024</Fit>
      </div>
      <svg viewBox="0 0 20 23" className="ml-[13px] mt-[2px] h-[23px] w-[20px]" fill="#134a5a">
        <path d="M10 0q7.500 0 7.500 8v5.500l2.300 4.500v1.500H.2V18l2.300-4.500V8Q2.500 0 10 0zM7 20.500h6Q12.500 23 10 23t-3-2.500z" />
      </svg>
      <div className="ml-[27px] mt-[3px]">
        <CopilotIcon />
      </div>
    </div>
  );
}

function Taskbar() {
  return (
    <div className="flex h-[67px] shrink-0 items-center border-t-2 border-[#a5c4c3] bg-linear-to-r from-[#d8f0e2] via-[#caf2f1] via-35% to-[#cbf1ef]">
      <div className="ml-[31px] w-[423.500px] pb-[5px]">
        <BallIcon />
      </div>
      <div className="flex h-full">
        {tasks.map((t) => (
          <div key={t.id} className="flex w-[65.600px] shrink-0 flex-col items-center pt-[5px]">
            <div className={`flex h-[56px] w-[56px] flex-col items-center rounded-[6px] pt-[11px] ${t.active ? "bg-[#e6f8f9] shadow-sm" : ""}`}>
              {t.icon}
              {t.open && <div className="mt-[6px] h-[5px] w-[9px] shrink-0 rounded-full bg-[#758786]" />}
              {t.active && <div className="mt-[6px] h-[5px] w-[24px] shrink-0 rounded-full bg-[#12808f]" />}
            </div>
          </div>
        ))}
      </div>
      <Tray />
    </div>
  );
}

export default function App() {
  return (
    <div className={`flex h-[1064px] w-[1894px] flex-col overflow-hidden bg-white ${SEGOE}`}>
      <TabStrip />
      <Toolbar />
      <BookmarksBar />
      <WebPage />
      <Taskbar />
    </div>
  );
}
